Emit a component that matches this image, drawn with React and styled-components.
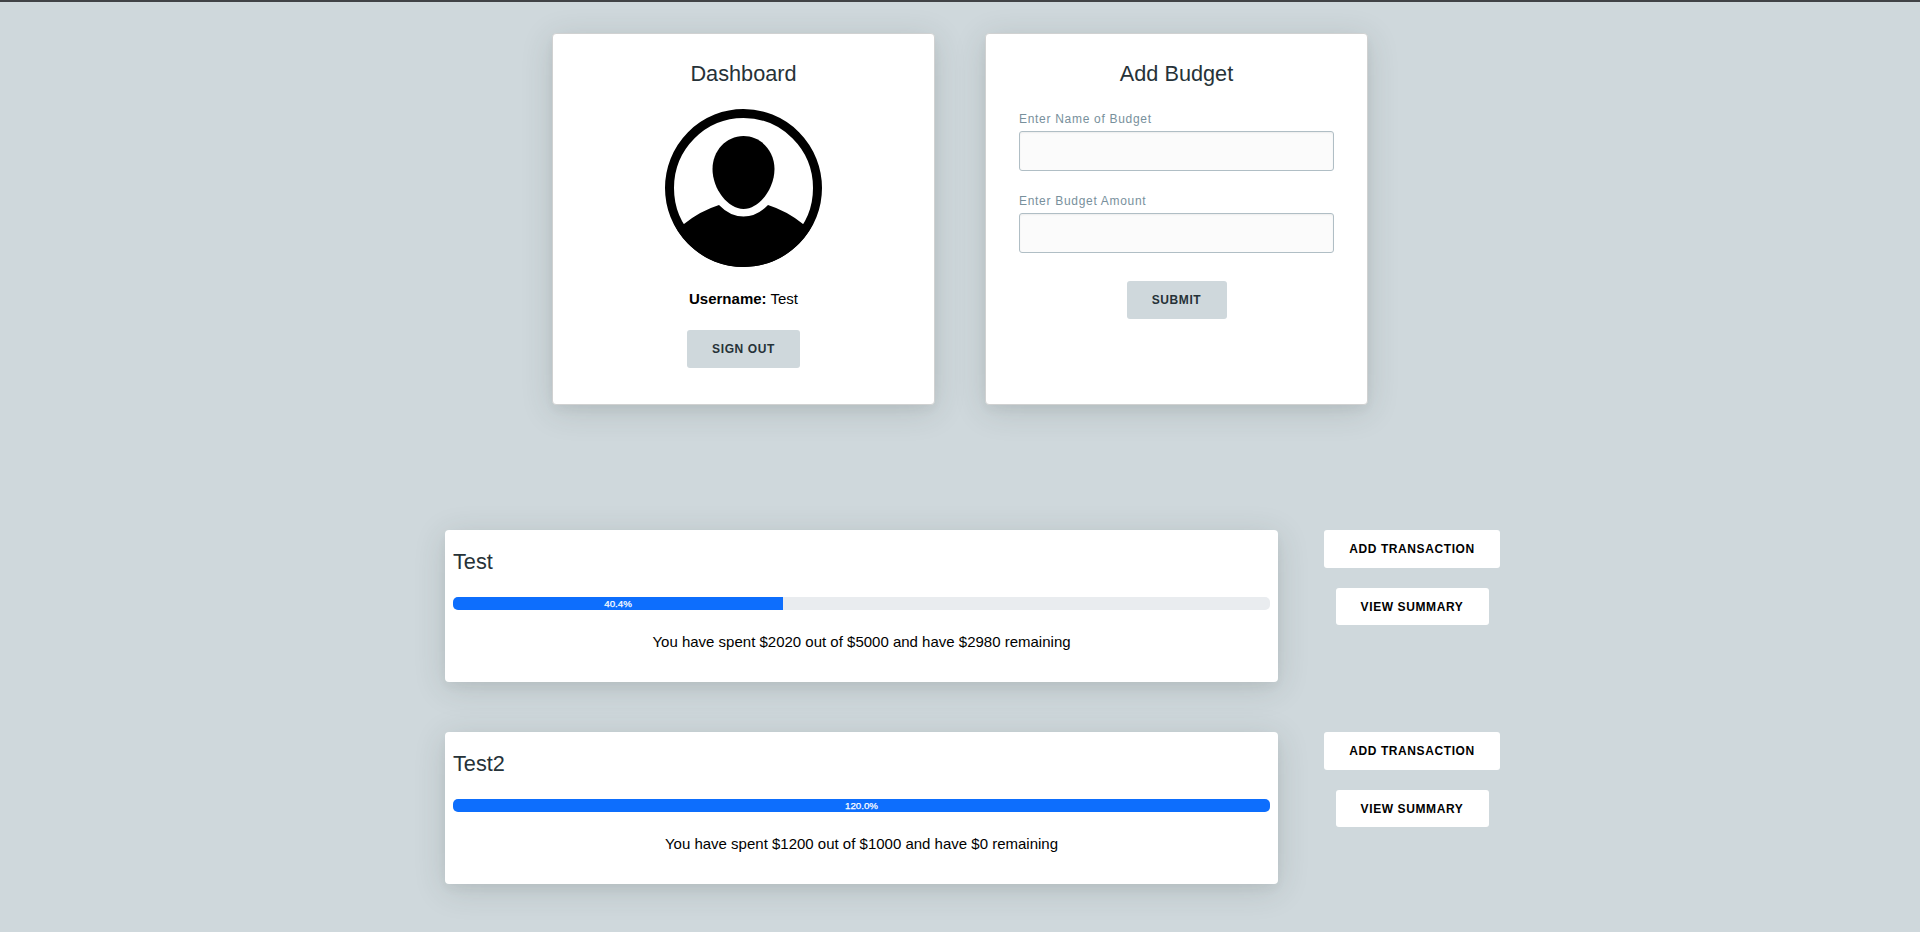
import React from 'react';
import styled, { createGlobalStyle } from 'styled-components';

const GlobalStyle = createGlobalStyle`
  *, *::before, *::after { box-sizing: border-box; }
  body {
    margin: 0;
    background: #cfd8dc;
    color: #000;
    font: 15px/22px "Liberation Sans", Arial, sans-serif;
  }
  h2, p { margin: 0; }
`;

const Page = styled.main`
  height: 932px;
  overflow: hidden;
  border-top: 2px solid #414346;
`;

const Panels = styled.section`
  display: flex;
  justify-content: center;
  gap: 50px;
  padding-top: 31px;
`;

const shadow = '0 5px 10px rgba(40, 55, 55, 0.04), 0 6px 32px rgba(50, 65, 55, 0.16)';

const Panel = styled.div`
  display: flex;
  flex-direction: column;
  align-items: center;
  width: 383px;
  height: 372px;
  padding: 27px 33px 0;
  border: 1px solid #d0d1d1;
  border-radius: 4px;
  background: #fff;
  box-shadow: ${shadow};
`;

const Title = styled.h2`
  font-size: 21.7px;
  font-weight: 400;
  line-height: 26px;
  color: #263238;
`;

const Avatar = styled.svg`
  display: block;
  width: 157px;
  height: 158px;
  margin-top: 22px;
`;

const Username = styled.p`
  margin: 21px 0 20px;
`;

const Button = styled.button`
  width: ${(p) => p.$width}px;
  height: ${(p) => p.$height || 38}px;
  padding: 0;
  border: 0;
  border-radius: 3px;
  background: ${(p) => (p.$light ? '#fff' : '#cfd8dc')};
  color: ${(p) => (p.$light ? '#000' : '#263238')};
  font: 700 12px/16px "Liberation Sans", Arial, sans-serif;
  letter-spacing: 0.6px;
  text-transform: uppercase;
`;

const Form = styled.form`
  display: flex;
  flex-direction: column;
  align-items: center;
  width: 100%;
  padding-top: 23px;
`;

const Field = styled.label`
  display: block;
  width: 315px;
  margin-bottom: 21px;
  color: #78909c;
  font-size: 12px;
  line-height: 18px;
  letter-spacing: 0.7px;
`;

const Input = styled.input`
  display: block;
  width: 100%;
  height: 40px;
  margin-top: 3px;
  padding: 0 12px;
  border: 1px solid #b0bec5;
  border-radius: 3px;
  background: #fbfbfb;
  box-shadow: inset 0 1px 2px rgba(0, 0, 0, 0.06);
`;

const SubmitRow = styled.div`
  padding-top: 7px;
`;

const Budgets = styled.section`
  display: flex;
  flex-direction: column;
  gap: 50px;
  padding: 125px 0 0 445px;
`;

const BudgetRow = styled.div`
  display: flex;
  gap: 46px;
`;

const BudgetCard = styled.article`
  width: 833px;
  height: 152px;
  padding: 19px 8px 0;
  border-radius: 4px;
  background: #fff;
  box-shadow: ${shadow};
`;

const Track = styled.div`
  height: 13px;
  margin: 22px 0 21px;
  overflow: hidden;
  border-radius: 5px;
  background: #e9ecef;
`;

const Fill = styled.div`
  height: 100%;
  background: #0d6efd;
  color: #fff;
  font-size: 9.75px;
  line-height: 13px;
  text-align: center;
  -webkit-text-stroke: 0.25px #fff;
`;

const Summary = styled.p`
  text-align: center;
`;

const Actions = styled.div`
  display: flex;
  flex-direction: column;
  align-items: center;
  gap: 20px;
`;

const budgets = [
  { name: 'Test', percent: 40.4, spent: 2020, total: 5000, left: 2980 },
  { name: 'Test2', percent: 120, spent: 1200, total: 1000, left: 0 },
];

export default function App() {
  return (
    <Page>
      <GlobalStyle />
      <Panels>
        <Panel>
          <Title>Dashboard</Title>
          <Avatar viewBox="0 0 157 158">
            <ellipse cx="78.5" cy="79" rx="74" ry="74.5" fill="none" stroke="#000" strokeWidth="9" />
            <path d="M78.5 27C96 27 109.500 42 109.500 60C109.500 80 94 100 78.500 100C63 100 47.500 80 47.500 60C47.500 42 61 27 78.500 27Z" />
            <path d="M19 115Q35 102 54 96Q65 107.500 78.500 107.500Q92 107.500 103 96Q122 102 138 115L148 115C135 140 110 158 78.500 158C47 158 22 140 9 115Z" />
          </Avatar>
          <Username><strong>Username:</strong> Test</Username>
          <Button $width={113}>Sign out</Button>
        </Panel>
        <Panel>
          <Title>Add Budget</Title>
          <Form>
            <Field>Enter Name of Budget<Input /></Field>
            <Field>Enter Budget Amount<Input /></Field>
            <SubmitRow><Button type="button" $width={100}>Submit</Button></SubmitRow>
          </Form>
        </Panel>
      </Panels>
      <Budgets>
        {budgets.map((b) => (
          <BudgetRow key={b.name}>
            <BudgetCard>
              <Title>{b.name}</Title>
              <Track>
                <Fill style={{ width: `${Math.min(b.percent, 100)}%` }}>{b.percent.toFixed(1)}%</Fill>
              </Track>
              <Summary>
                {`You have spent $${b.spent} out of $${b.total} and have $${b.left} remaining`}
              </Summary>
            </BudgetCard>
            <Actions>
              <Button $light $width={176}>Add transaction</Button>
              <Button $light $width={153} $height={37}>View summary</Button>
            </Actions>
          </BudgetRow>
        ))}
      </Budgets>
    </Page>
  );
}
